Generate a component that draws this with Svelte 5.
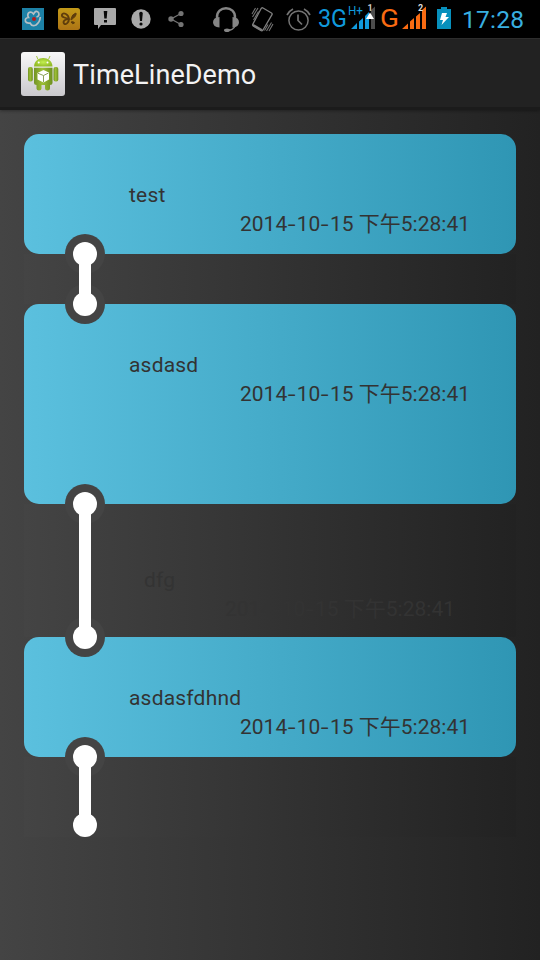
<script>
  const date = ['2014', '10', '15'];
  const clock = '下午5:28:41';
  const rows = [
    { kind: 'card', title: 'test', height: 120 },
    { kind: 'link', height: 50 },
    { kind: 'card', title: 'asdasd', height: 200 },
    { kind: 'link', title: 'dfg', height: 133 },
    { kind: 'card', title: 'asdasfdhnd', height: 120 },
    { kind: 'link', height: 80, last: true }
  ];
</script>

<div class="screen">
  <div class="status">
    <svg width="52" height="38" viewBox="0 0 52 38">
      <rect x="22" y="8" width="22" height="22" fill="#1d81a6" />
      <path d="M36.500 17 Q40 16 38.500 12.500 Q36 9.500 33.500 14 Q31 11 28.500 13 Q27 15 28.500 17.500 Q24.500 18 25.500 21.500 Q26.500 23.500 30 23 Q32 27 36 25 Q40 22 40.300 17" fill="none" stroke="#b4bfc4" stroke-width="1.700" />
      <circle cx="34" cy="19" r="2" fill="#b41c1c" />
    </svg>
    <svg width="36" height="38" viewBox="52 0 36 38">
      <defs><linearGradient id="gold" x2="0" y2="1"><stop stop-color="#c39a18" /><stop offset="1" stop-color="#ad7415" /></linearGradient></defs>
      <rect x="58" y="8" width="22" height="22" rx="2.500" fill="url(#gold)" />
      <path d="M69 19 C65 18 61 17 62 14.500 C63.500 12 68.500 14 69 19 C65 19 62.500 21 64 23.500 C66 25.500 69 22 69 19 Z" fill="none" stroke="#5f3d0c" stroke-width="1.800" />
      <path d="M71 19 Q72 14 76 13 Q77 16 71 20 Z M71 22 q3-1 3.500 1 q-2 2-3.500-1Z" fill="#5f3d0c" stroke="#5f3d0c" />
    </svg>
    <svg width="36" height="38" viewBox="88 0 36 38">
      <path d="M95 8 H115 Q116 8 116 9 V24 Q116 25 115 25 H101 L98 29 V25 H95 Q94 25 94 24 V9 Q94 8 95 8 Z" fill="#a9a9a9" />
      <path d="M103.700 11 H107.300 L106.700 18.500 H104.300 Z M104 20 H107 V22.500 H104 Z" fill="#080808" />
    </svg>
    <svg width="36" height="38" viewBox="124 0 36 38">
      <circle cx="141" cy="19" r="9.700" fill="#a9a9a9" />
      <path d="M139.200 13 Q141 10.500 142.800 13 L142 21 H140 Z" fill="#080808" /><circle cx="141" cy="24" r="1.600" fill="#080808" />
    </svg>
    <svg width="46" height="38" viewBox="160 0 46 38">
      <path d="M181 13.500 L171 19 L181 24.500" fill="none" stroke="#747474" stroke-width="1.300" />
      <circle cx="171" cy="19" r="2.700" fill="#747474" /><circle cx="181" cy="13.500" r="2.600" fill="#747474" /><circle cx="181" cy="24.500" r="2.600" fill="#747474" />
    </svg>
    <svg width="39" height="38" viewBox="206 0 39 38">
      <path d="M217 18 C216 5 236 5 235 18" fill="none" stroke="#858585" stroke-width="2.300" />
      <path d="M219.500 17 V27.500 Q213 27 213 22.300 Q213 17.500 219.500 17 Z M232.500 17 V27.500 Q239 27 239 22.300 Q239 17.500 232.500 17 Z" fill="#858585" />
      <path d="M235 26 Q233 30.500 227.500 30.300" fill="none" stroke="#858585" stroke-width="1.500" /><ellipse cx="227" cy="30.300" rx="3" ry="1.800" fill="#858585" />
    </svg>
    <svg width="35" height="38" viewBox="245 0 35 38">
      <path d="M263 8 L271.500 13 Q272.500 13.700 272 14.700 L263 30 Q262 31.300 260.700 30.500 L253.300 26 Q252.300 25.300 252.800 24.300 L261 8.800 Q261.800 7.300 263 8 Z" fill="none" stroke="#808080" stroke-width="1.300" />
      <path d="M253.500 24 L262.500 29.300 L261.500 31 L252.500 26 Z" fill="#808080" />
      <path d="M252 14 L255.500 8 M252.500 17 L258 8 M253.500 20 L258.500 11.500 M264.500 30.500 L268 24.500 M266.500 31 L271.500 22.500 M269 31 L273 24" stroke="#747474" stroke-width="1.100" />
    </svg>
    <svg width="36" height="38" viewBox="280 0 36 38">
      <circle cx="298.500" cy="20.500" r="9.600" fill="none" stroke="#747474" stroke-width="1.500" />
      <path d="M298 14.500 V20.500 L302 24.500 M287 15 Q289 11 293 9 M304 9 Q308 11 310 15" fill="none" stroke="#747474" stroke-width="1.700" />
    </svg>
    <svg width="62" height="38" viewBox="316 0 62 38">
      <text x="318" y="27" font-size="26.500" textLength="29" lengthAdjust="spacingAndGlyphs" fill="#1099dc">3G</text>
      <text x="348" y="15" font-size="13" textLength="15" lengthAdjust="spacingAndGlyphs" fill="#1099dc">H+</text>
      <path d="M351 29 L357 23 V29 Z M359 21.500 L363 18 V29 H359 Z M365 16 L369 12 V29 H365 Z" fill="#1099dc" />
      <path d="M371 10 L375 6.500 V29 H371 Z" fill="#4c4c4c" />
      <path d="M366 19 L370 12.500 L374 19 Z" fill="#fff" />
      <text x="367.500" y="11" font-size="9" font-weight="bold" fill="#ccc">1</text>
    </svg>
    <svg width="52" height="38" viewBox="378 0 52 38">
      <text x="380" y="27" font-size="26.500" textLength="19" lengthAdjust="spacingAndGlyphs" fill="#f96b12">G</text>
      <path d="M402 29 L408 23.500 V29 Z M410 21.500 L414 18 V29 H410 Z M416 16.500 L420 13 V29 H416 Z M422 10 L426 6.500 V29 H422 Z" fill="#f96b12" />
      <text x="418" y="11" font-size="9" font-weight="bold" fill="#ddd">2</text>
    </svg>
    <svg width="110" height="38" viewBox="430 0 110 38">
      <path d="M437 9 H441 V7 H447 V9 H451 V29 H437 Z" fill="#0790bd" />
      <path d="M442 13 H447 L445.500 17 H449 L441.500 25 L443 20 H440 Z" fill="#fff" />
      <text x="462" y="28" font-size="24.500" textLength="62" fill="#38afe0">17:28</text>
    </svg>
  </div>

  <header>
    <svg width="46" height="46" viewBox="0 0 46 46">
      <defs>
        <linearGradient id="tile" x2="0" y2="1"><stop stop-color="#f8f8f8" /><stop offset="1" stop-color="#cac9cd" /></linearGradient>
        <linearGradient id="green"><stop stop-color="#729326" /><stop offset=".45" stop-color="#9dbf34" /><stop offset="1" stop-color="#6e8f20" /></linearGradient>
        <radialGradient id="head"><stop stop-color="#c3ef51" /><stop offset="1" stop-color="#94bc27" /></radialGradient>
      </defs>
      <rect x="1" y="1" width="44" height="44" rx="3" fill="url(#tile)" />
      <path d="M18 8.500 L16.500 5 M28.500 8.500 L30 5" stroke="#a7c93d" stroke-width="1" />
      <path d="M14 15.500 C14.500 4 32 4 32.500 15.500 Z" fill="url(#head)" />
      <circle cx="18.700" cy="11.500" r="1" fill="#fff" /><circle cx="27.500" cy="11.500" r="1" fill="#fff" />
      <rect x="8" y="16" width="4.800" height="14.500" rx="2" fill="url(#green)" />
      <rect x="33.500" y="16" width="4.800" height="14.500" rx="2" fill="url(#green)" />
      <path d="M14 16.700 H32.500 V32 Q32.500 34 30 34 V37.500 Q30 39.500 27.500 39.500 Q25 39.500 25 37.500 V34 H21.500 V37.500 Q21.500 39.500 19 39.500 Q16.500 39.500 16.500 37.500 V34 Q14 34 14 32 Z" fill="url(#green)" />
      <path d="M23.500 19 L29 21.500 V28.500 L23.500 31.500 L17.500 28.500 V22 Z" fill="#fff" />
      <path d="M18 22.300 L23.500 24.500 L28.500 22 M23.500 24.500 V31" fill="none" stroke="#8ba15a" stroke-width="1" />
    </svg>
    <h1>TimeLineDemo</h1>
  </header>

  <main>
    {#each rows as row}
      <section class={row.kind} class:filled={row.title} style:height="{row.height}px">
        {#if row.kind === 'link'}
          <svg class="connector" width="40" height={row.height + 40} viewBox="0 -20 40 {row.height + 40}">
            <circle cx="20" cy="0" r="20" fill="#444" />
            {#if !row.last}<circle cx="20" cy={row.height} r="20" fill="#444" />{/if}
            <rect x="14" y="0" width="12" height={row.last ? 68 : row.height} fill="#fff" />
            <circle cx="20" cy="0" r="12" fill="#fff" />
            <circle cx="20" cy={row.last ? 68 : row.height} r="12" fill="#fff" />
          </svg>
        {/if}
        {#if row.title}
          <div class="title">{row.title}</div>
          <time>{date[0]}<span class="dash">-</span>{date[1]}<span class="dash">-</span>{date[2]} {clock}</time>
        {/if}
      </section>
    {/each}
  </main>
</div>

<style>
  :global(body) { margin: 0; background: #222; }
  .screen {
    width: 540px;
    height: 960px;
    display: flex;
    flex-direction: column;
    overflow: hidden;
    font-family: Roboto, "Noto Sans CJK SC", sans-serif;
    background: linear-gradient(90deg, #444, #222);
  }
  svg { display: block; flex: none; }
  .status { height: 38px; flex: none; display: flex; background: #000; }
  header {
    box-sizing: border-box;
    height: 72px;
    flex: none;
    display: flex;
    align-items: center;
    padding: 2px 20px 0;
    background: #222;
    border-top: 1px solid #2d2d2d;
    border-bottom: 3px solid #1b1b1b;
    box-shadow: 0 1px 3px #0005;
  }
  h1 {
    margin: 2px 0 0 7px;
    color: #f3f3f3;
    font-size: 27px;
    line-height: 32px;
    font-weight: 400;
    letter-spacing: .1px;
  }
  main { padding: 24px 24px 0; }
  section { position: relative; box-sizing: border-box; }
  .card { padding: 47px 46px 0 105px; border-radius: 15px; background: linear-gradient(90deg, #5bc0de, #2f96b4); }
  .link { background: linear-gradient(90deg, #444, #222); }
  .link.filled { padding: 62px 61px 0 120px; }
  .connector { position: absolute; z-index: 1; left: 41px; top: -20px; }
  .title, time {
    display: block;
    height: 29px;
    line-height: 29px;
    font-size: 21px;
    color: #333;
    white-space: nowrap;
  }
  .title { letter-spacing: .2px; }
  time { text-align: right; }
  .dash {
    display: inline-block;
    width: 9.600px;
    text-align: center;
    transform: scaleX(1.350);
  }
</style>
